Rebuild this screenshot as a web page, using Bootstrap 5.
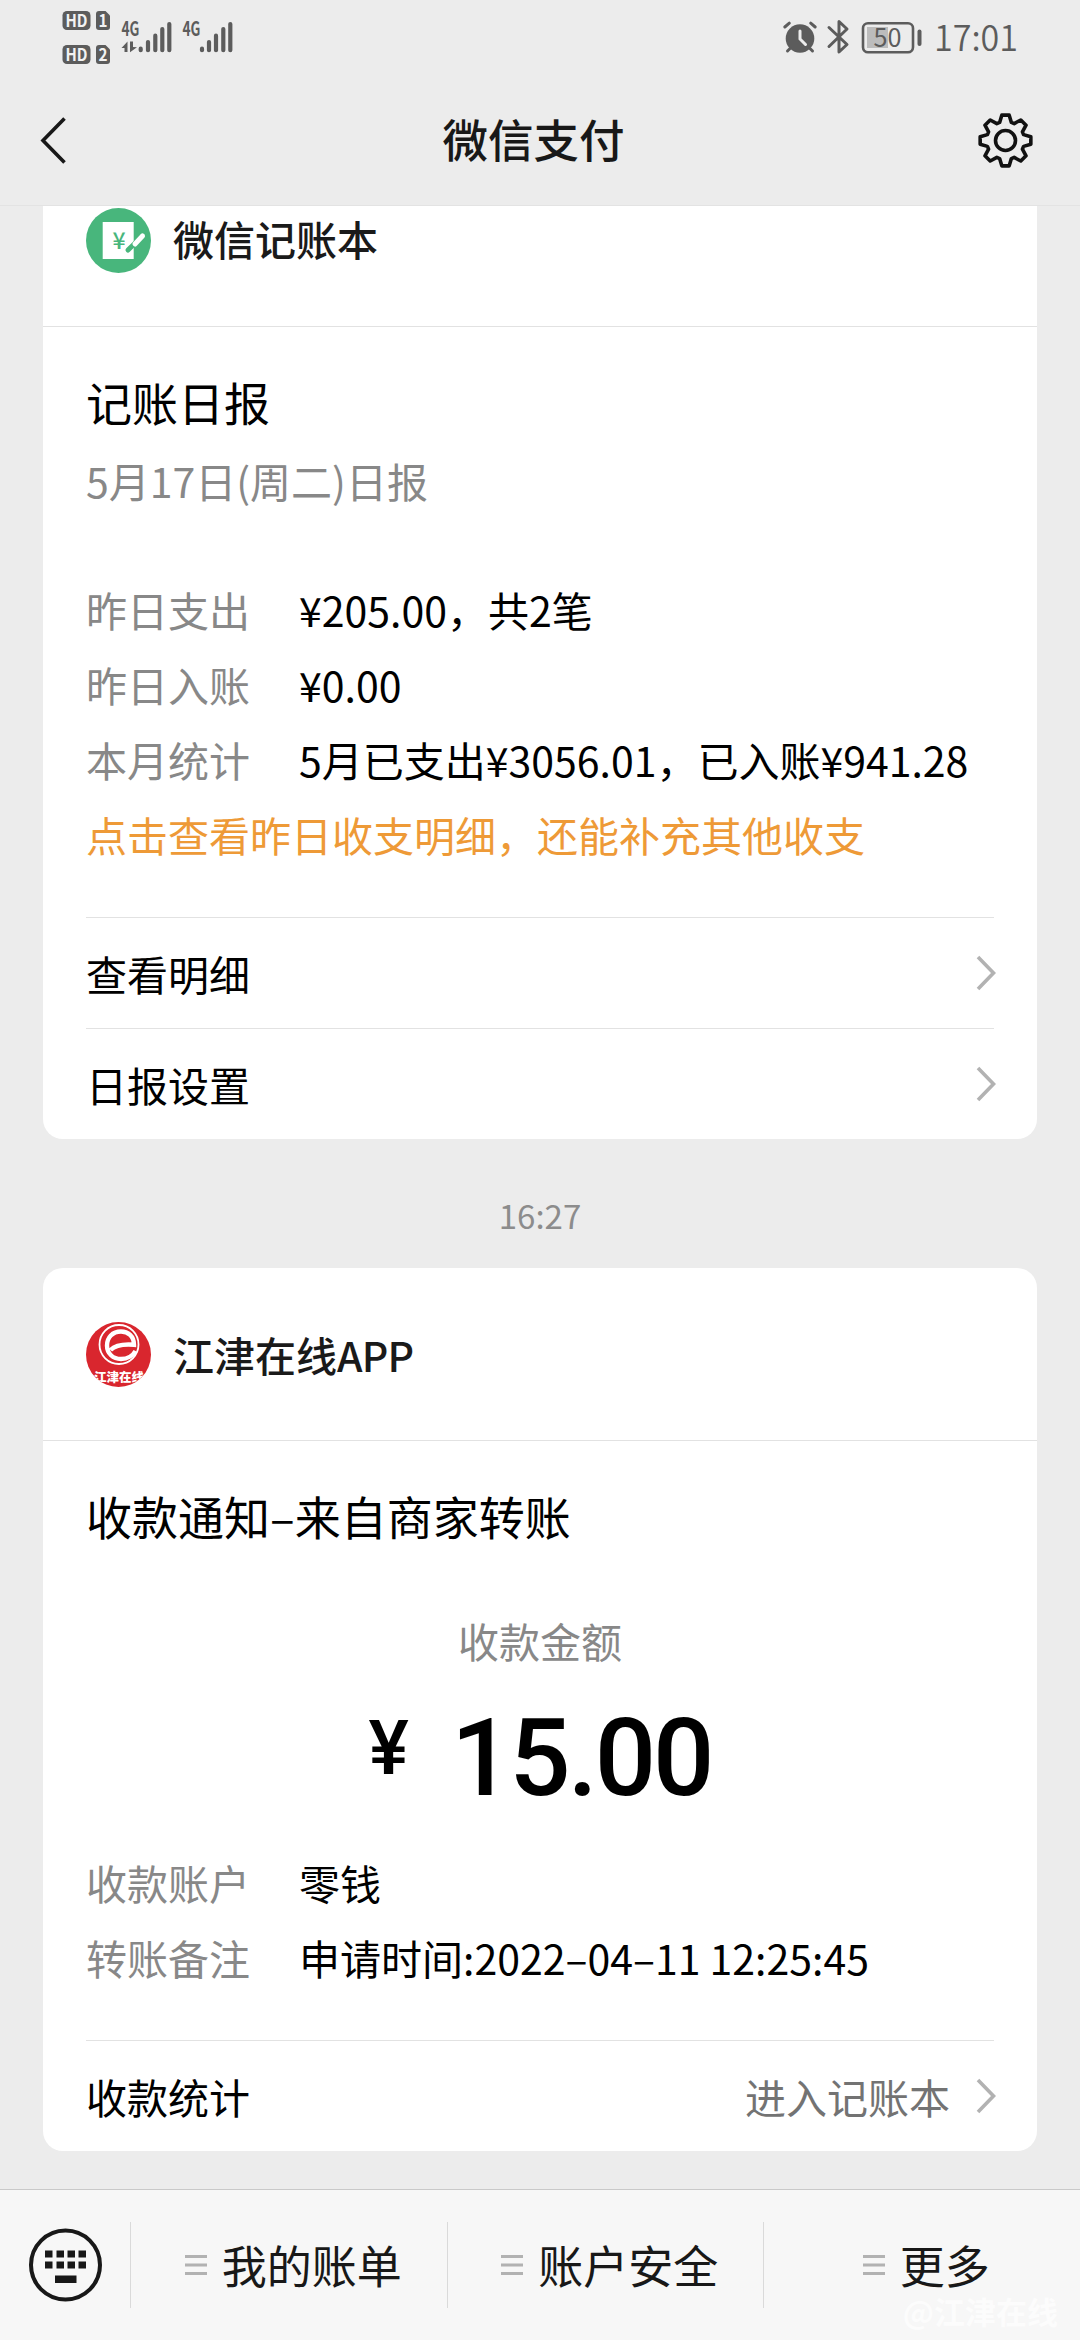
<!DOCTYPE html>
<html lang="zh-CN">
<head>
<meta charset="utf-8">
<meta name="viewport" content="width=device-width, initial-scale=1">
<title>微信支付</title>
<link href="https://cdn.jsdelivr.net/npm/bootstrap@5.3.0/dist/css/bootstrap.min.css" rel="stylesheet">
<style>
  body { width: 1080px; height: 2340px; overflow: hidden; background: #ececec; color: #000;
    font-family: "Noto Sans CJK SC", sans-serif; font-size: 41px; }
  svg { display: block; flex: none; }
  svg text { font-family: "Noto Sans CJK SC", sans-serif; }
  .status-bar { height: 76px; }
  .title-bar { height: 130px; padding: 0 46px 0 40px; border-bottom: 1px solid #e3e3e3; color: #181818; }
  .title-bar h1 { font-size: 45.5px; font-weight: 500; line-height: 60px; padding: 0 0 5px 23px; }
  .msg-card { margin: 0 43px; border: 0; border-radius: 20px; background: #fff; --bs-card-border-width: 0; }
  .msg-clipped { border-top-left-radius: 0; border-top-right-radius: 0; }
  .msg-source { height: 172px; padding: 0 43px; gap: 22px; color: #1a1a1a; font-weight: 500; line-height: 60px; }
  .msg-clipped .msg-source { height: 120px; padding-top: 2px; }
  .msg-content { padding: 44px 43px 0; border-top: 1px solid #e2e2e2; }
  .msg-title { font-size: 46px; font-weight: 400; line-height: 60px; }
  .msg-sub { color: #888; line-height: 60px; margin-top: 19px; }
  .facts { margin-top: 62px; line-height: 75px; }
  .facts .fact-name { width: 213px; color: #888; flex: none; }
  .hint { color: #ee9a37; }
  .msg-links { margin: 45px 0 0; }
  .msg-links a { height: 111px; border-top: 1px solid #e2e2e2; color: #000; text-decoration: none; line-height: 60px; }
  .msg-links svg { margin-right: -2px; }
  .enter-note { color: #737373; margin-right: 26px; }
  .time-mark { height: 129px; padding-top: 22px; color: #8c8c8c; font-size: 33px; line-height: 50px; }
  .amount-label { margin-top: 65px; }
  .amount { height: 175px; padding-top: 34px; font-family: Roboto, sans-serif; font-weight: 500; }
  .amount-unit { font-size: 76px; line-height: 76px; margin: 6px 42px 0 0; }
  .amount-num { font-size: 108px; line-height: 108px; letter-spacing: -3px; }
  .menu-bar { height: 151px; margin-top: 38px; background: #f7f7f7; border-top: 1px solid #c9c9c9; color: #181818; font-size: 45px; line-height: 48px; }
  .menu-key { width: 130px; }
  .menu-entry { height: 86px; width: 316.5px; border-left: 1px solid #dadada; gap: 15px; padding-left: 9px; }
  .watermark { right: 22px; bottom: 13px; font-size: 31px; line-height: 32px; font-weight: 700; color: #fcfcfc; }
</style>
</head>
<body class="d-flex flex-column">
<svg width="0" height="0" class="position-absolute">
  <defs>
    <symbol id="chevron" viewBox="0 0 20 36"><path d="M2 2 17.500 18 2 34" fill="none" stroke="#b2b2b2" stroke-width="3.600"/></symbol>
    <symbol id="bars" viewBox="0 0 22 22"><path d="M0 2.500h22M0 11h22M0 19.500h22" stroke="#b2b2b2" stroke-width="3.200"/></symbol>
  </defs>
</svg>

<header>
  <div class="status-bar d-flex justify-content-between">
    <svg width="300" height="76" fill="#5c5c5c">
      <rect x="62.500" y="11" width="28" height="19" rx="4.500"/>
      <rect x="62.500" y="45" width="28" height="19" rx="4.500"/>
      <path d="M99 11h6.500l4.500 4.500V27a3 3 0 0 1-3 3h-8a3 3 0 0 1-3-3V14a3 3 0 0 1 3-3z"/>
      <path d="M99 45h6.500l4.500 4.500V61a3 3 0 0 1-3 3h-8a3 3 0 0 1-3-3V48a3 3 0 0 1 3-3z"/>
      <g fill="#f2f2f2" font-size="17" font-weight="700">
        <text x="65.500" y="26.800" textLength="22" lengthAdjust="spacingAndGlyphs">HD</text>
        <text x="65.500" y="60.800" textLength="22" lengthAdjust="spacingAndGlyphs">HD</text>
        <text x="98.500" y="26.800" textLength="9" lengthAdjust="spacingAndGlyphs">1</text>
        <text x="98.500" y="60.800" textLength="9" lengthAdjust="spacingAndGlyphs">2</text>
      </g>
      <g font-size="19.500" font-weight="700">
        <text x="121.500" y="36" textLength="18" lengthAdjust="spacingAndGlyphs">4G</text>
        <text x="182.500" y="36" textLength="18" lengthAdjust="spacingAndGlyphs">4G</text>
      </g>
      <path d="M121.500 48 127.500 41.500V52h-3v-4zM130 41.500h3V47l4 .3-7 5z"/>
      <g stroke="#5c5c5c" stroke-width="4.200" stroke-linecap="round">
        <path d="M140.700 48.700v1.500M148 42v8.200M155.300 35.700v14.500M162.300 29v21.200M169.300 24v26.200"/>
        <path d="M202 48.700v1.500M209 42v8.200M216 35.700v14.500M223.300 29v21.200M230.300 24v26.200"/>
      </g>
    </svg>
    <svg width="310" height="76" fill="#5c5c5c" stroke-linecap="round">
      <circle cx="30" cy="38.500" r="14.300"/>
      <path d="M30 31v8l5.500 5.500" fill="none" stroke="#ececec" stroke-width="3"/>
      <path d="M14.800 27 19.300 23.200M45.200 27 40.700 23.200M20 48.500 17.500 51M40 48.500 42.500 51" fill="none" stroke="#5c5c5c" stroke-width="3"/>
      <path d="M59 27.500 77 44.500 69 52V21.500L77 29 59 46.500" fill="none" stroke="#5c5c5c" stroke-width="3" stroke-linejoin="round"/>
      <rect x="97" y="27" width="21" height="21" fill="#bcbcbc"/>
      <rect x="93" y="23.200" width="50" height="29" rx="5" fill="none" stroke="#5c5c5c" stroke-width="2.600"/>
      <path d="M149.500 31.500v12.500" stroke="#5c5c5c" stroke-width="4"/>
      <text x="103.500" y="46.500" font-size="25.500" textLength="28" lengthAdjust="spacingAndGlyphs">50</text>
      <text x="164" y="51.300" font-size="35" font-weight="350" textLength="84" lengthAdjust="spacingAndGlyphs">17:01</text>
    </svg>
  </div>
  <nav class="title-bar navbar flex-nowrap">
    <svg width="28" height="50" viewBox="0 0 28 50"><path d="M24.500 2.500 3 24.500 24.500 46.500" fill="none" stroke="#181818" stroke-width="3.600"/></svg>
    <h1 class="m-0 flex-fill text-center">微信支付</h1>
    <svg width="58" height="58" viewBox="-29.500 -28.500 58 58" fill="none" stroke="#111" stroke-width="3.600" stroke-linejoin="round">
      <path d="M-5.870-18.070-3.700-25.330H3.700L5.870-18.070 8.630-16.930 15.290-20.530 20.530-15.290 16.930-8.630 18.070-5.870 25.330-3.700V3.700L18.070 5.870 16.930 8.630 20.530 15.290 15.290 20.530 8.630 16.930 5.870 18.070 3.700 25.330H-3.700L-5.870 18.070-8.630 16.930-15.290 20.530-20.530 15.290-16.930 8.630-18.070 5.870-25.330 3.700V-3.700L-18.070-5.870-16.930-8.630-20.530-15.290-15.290-20.530-8.630-16.930Z"/>
      <circle r="10"/>
    </svg>
  </nav>
</header>

<main>
  <article class="msg-card card msg-clipped">
    <div class="msg-source d-flex align-items-start">
      <svg width="65" height="65" viewBox="0 0 65 65">
        <circle cx="32.500" cy="32.500" r="32.500" fill="#48b67c"/>
        <path d="M16.700 14h31v37h-31z" fill="#fff"/>
        <text x="33" y="41" font-size="23" font-weight="500" fill="#48b67c" text-anchor="middle">¥</text>
        <path d="M42 42 57 27.500" stroke="#48b67c" stroke-width="5" stroke-linecap="round"/>
        <path d="M49 36 56.500 28" stroke="#fff" stroke-width="5" stroke-linecap="round"/>
      </svg>
      <span>微信记账本</span>
    </div>
    <div class="msg-content">
      <h2 class="msg-title m-0">记账日报</h2>
      <div class="msg-sub">5月17日(周二)日报</div>
      <div class="facts">
        <div class="d-flex"><span class="fact-name">昨日支出</span><span>¥205.00，共2笔</span></div>
        <div class="d-flex"><span class="fact-name">昨日入账</span><span>¥0.00</span></div>
        <div class="d-flex text-nowrap"><span class="fact-name">本月统计</span><span>5月已支出¥3056.01，已入账¥941.28</span></div>
        <div class="hint">点击查看昨日收支明细，还能补充其他收支</div>
      </div>
      <div class="msg-links">
        <a href="#" class="d-flex align-items-center justify-content-between">查看明细<svg width="20" height="36"><use href="#chevron"/></svg></a>
        <a href="#" class="d-flex align-items-center justify-content-between">日报设置<svg width="20" height="36"><use href="#chevron"/></svg></a>
      </div>
    </div>
  </article>

  <div class="time-mark d-flex align-items-center justify-content-center">16:27</div>

  <article class="msg-card card">
    <div class="msg-source d-flex align-items-center">
      <svg width="65" height="65" viewBox="0 0 65 65">
        <clipPath id="disc"><circle cx="32.500" cy="32.500" r="32.500"/></clipPath>
        <g clip-path="url(#disc)">
          <path d="M0 0h65v65H0z" fill="#d9262e"/>
          <circle cx="33" cy="22.500" r="19.500" fill="none" stroke="#fff" stroke-width="1.800"/>
          <path d="M24.500 28C30 22.500 38 22 48 22.800 48 14 42 9.500 35 9.500 26.500 9.500 21 15.500 21 23.500 21 31.500 27 37 35 37 41.500 37 47 33.500 49.500 29" fill="none" stroke="#fff" stroke-width="4.400"/>
          <text x="33" y="59.500" font-size="12.500" font-weight="900" fill="#fff" text-anchor="middle">江津在线</text>
        </g>
      </svg>
      <span>江津在线<span style="letter-spacing:-.8px">APP</span></span>
    </div>
    <div class="msg-content">
      <h2 class="msg-title m-0">收款通知–来自商家转账</h2>
      <div class="text-center msg-sub amount-label">收款金额</div>
      <div class="amount d-flex justify-content-center">
        <span class="amount-unit">¥</span><span class="amount-num">15.00</span>
      </div>
      <div class="facts mt-0">
        <div class="d-flex"><span class="fact-name">收款账户</span><span>零钱</span></div>
        <div class="d-flex"><span class="fact-name">转账备注</span><span>申请时间:2022–04–11 12:25:45</span></div>
      </div>
      <div class="msg-links">
        <a href="#" class="d-flex align-items-center">收款统计<span class="enter-note ms-auto">进入记账本</span><svg width="20" height="36"><use href="#chevron"/></svg></a>
      </div>
    </div>
  </article>
</main>

<footer class="menu-bar d-flex align-items-center position-relative">
  <div class="menu-key d-flex justify-content-center">
    <svg width="74" height="74" viewBox="-37.500 -37 74 74" fill="#181818">
      <circle r="34.500" fill="none" stroke="#181818" stroke-width="4"/>
      <path d="M-20.500-14.500h7.500v7h-7.500zM-9-14.500h7.500v7H-9zM2-14.500h7.500v7H2zM13-14.500h7.500v7H13zM-20.500-3.500h7.500v7h-7.500zM-9-3.500h7.500v7H-9zM2-3.500h7.500v7H2zM13-3.500h7.500v7H13zM-10.500 10.500h21.500v7.500h-21.500z"/>
    </svg>
  </div>
  <div class="menu-entry d-flex align-items-center justify-content-center"><svg width="22" height="22"><use href="#bars"/></svg><span>我的账单</span></div>
  <div class="menu-entry d-flex align-items-center justify-content-center"><svg width="22" height="22"><use href="#bars"/></svg><span>账户安全</span></div>
  <div class="menu-entry d-flex align-items-center justify-content-center"><svg width="22" height="22"><use href="#bars"/></svg><span>更多</span></div>
  <div class="watermark position-absolute">@江津在线</div>
</footer>
<script src="https://cdn.jsdelivr.net/npm/bootstrap@5.3.0/dist/js/bootstrap.bundle.min.js"></script>
</body>
</html>
